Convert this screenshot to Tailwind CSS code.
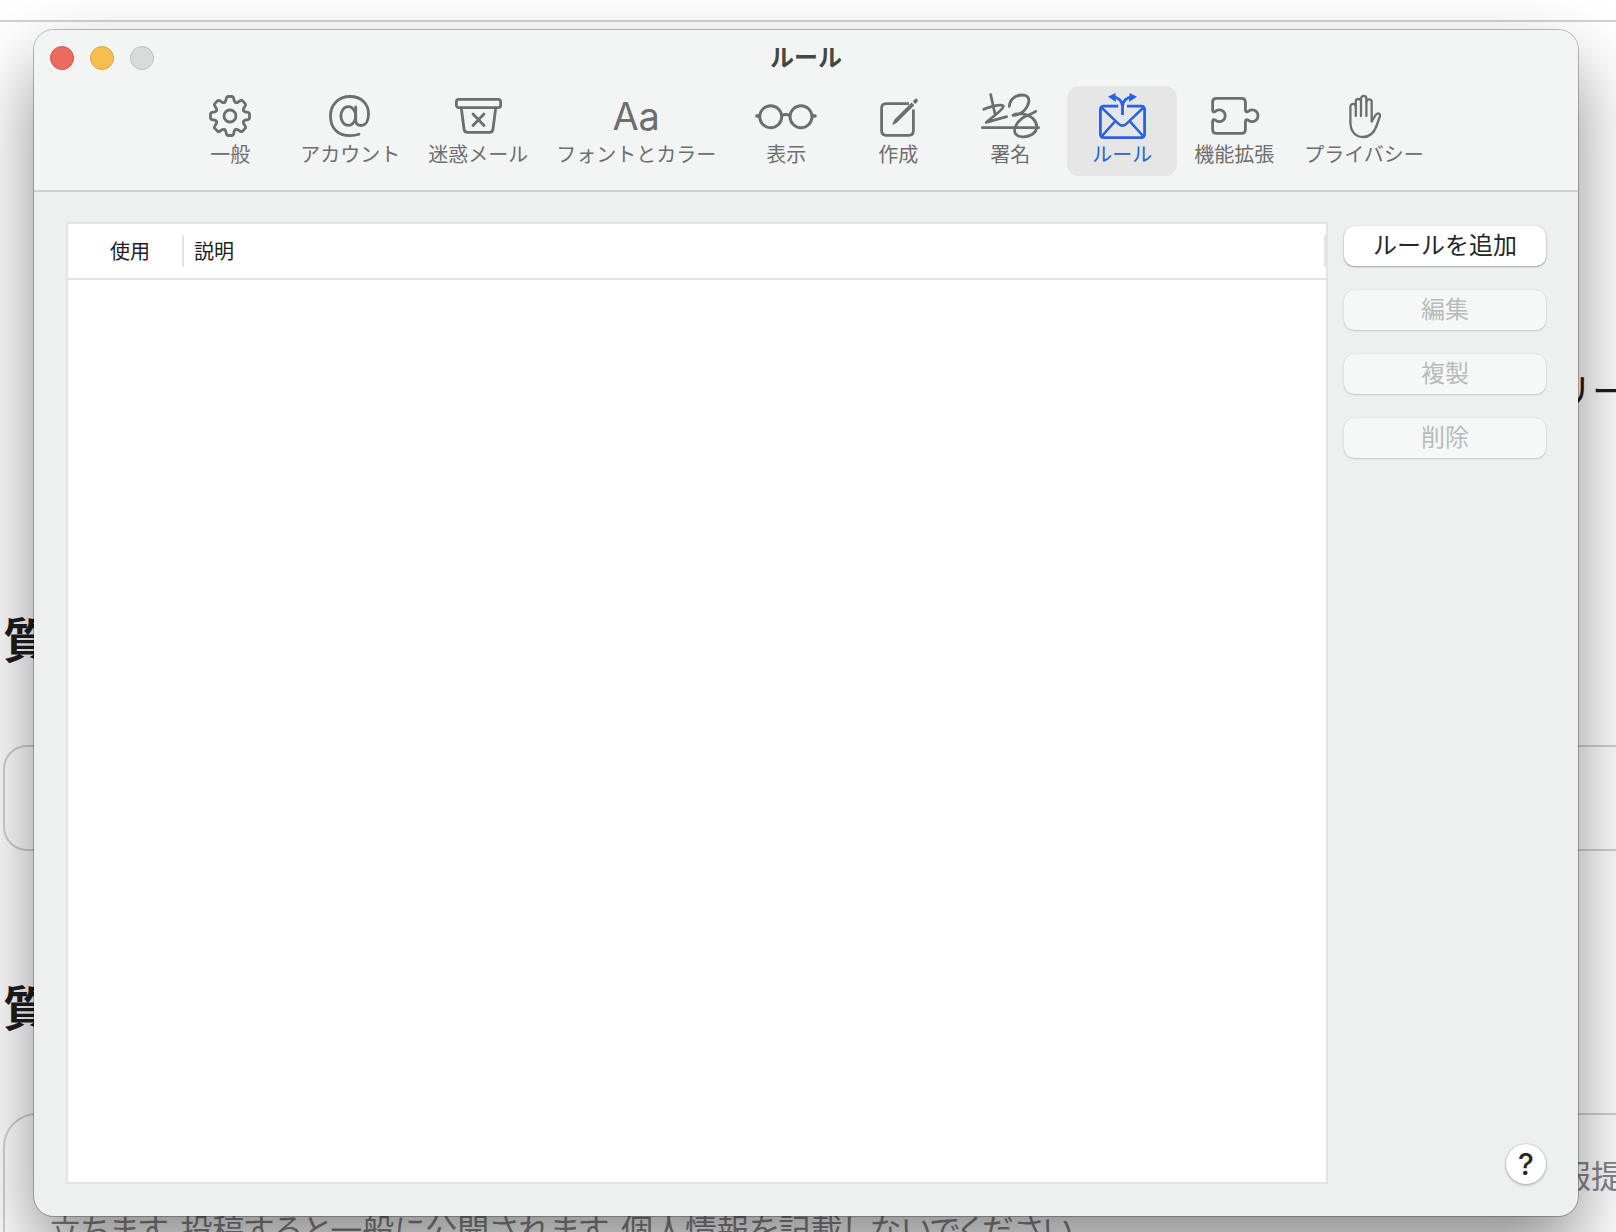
<!DOCTYPE html>
<html lang="ja">
<head>
  <meta charset="UTF-8" />
  <meta name="viewport" content="width=device-width, initial-scale=1.0" />
  <title>ルール</title>
  <script src="https://cdn.jsdelivr.net/npm/@tailwindcss/browser@4"></script>
</head>
<body class="relative h-screen overflow-hidden bg-white font-['Noto_Sans_CJK_JP',sans-serif] text-[#1d1d1f]">

  <!-- Page behind the window -->
  <div class="absolute inset-0 overflow-hidden whitespace-nowrap" aria-hidden="true">
    <hr class="mt-5 border-t-2 border-[#d2d2d4]" />
    <div class="flex justify-end pt-[343px]">
      <p class="w-[60px] text-[36px] leading-12 font-normal">リー</p>
    </div>
    <p class="mt-[192px] pl-[3px] text-[48px] leading-16 font-bold">質</p>
    <div class="mt-[76px] -mr-10 ml-[3px] h-[106px] rounded-3xl border-2 border-[#d2d2d7]"></div>
    <p class="mt-[122px] pl-[3px] text-[48px] leading-16 font-bold">質</p>
    <div class="mt-[76px] -mr-10 ml-[3px] h-60 rounded-[34px] border-2 border-[#d2d2d7] pt-8 pr-[46px] pl-11 text-[32px] leading-[54px] text-[#86868b]">
      <p class="flex justify-end"><span class="w-[49px]">報提</span></p>
      <p class="[font-feature-settings:'palt']">立ちます。投稿すると一般に公開されます。個人情報を記載しないでください。</p>
    </div>
  </div>

  <!-- Settings window -->
  <div class="relative flex h-full pt-[30px] pr-[38px] pb-4 pl-[34px]">
    <main class="flex flex-1 flex-col overflow-hidden rounded-[20px] bg-[#eef0ef] shadow-[0_0_0_1px_rgba(0,0,0,0.25),0_36px_72px_rgba(0,0,0,0.45)]">

      <header class="border-b-2 border-[#cfd1d0] bg-[#f3f5f4] pb-3.5">
        <div class="grid h-14 grid-cols-3 items-center px-4">
          <div class="flex gap-4">
            <button aria-label="閉じる" class="size-6 rounded-full border border-[#d5544a] bg-[#ec6a5e]"></button>
            <button aria-label="しまう" class="size-6 rounded-full border border-[#d9a441] bg-[#f5bf4f]"></button>
            <button aria-label="拡大" disabled class="size-6 rounded-full border border-[#bfc1c0] bg-[#d9dbda]"></button>
          </div>
          <h1 class="pb-1 text-center text-2xl font-bold text-[#454646]">ルール</h1>
        </div>

        <nav class="flex justify-center gap-0.5 text-xl leading-6 text-[#6d6e6e]">
          <button class="flex h-[90px] min-w-[110px] flex-col items-center gap-1 px-[13px] pt-2">
            <span class="flex h-11 items-center">
              <svg width="44" height="44" viewBox="-22 -22 44 44" fill="none" stroke="currentColor" stroke-width="2.8" stroke-linecap="round">
                <defs><path id="tooth" d="M-5.6 -13.5Q-4.6 -13.9 -4.2 -15.3L-3.6 -18Q-3.3 -19.5 -2 -19.5H2Q3.3 -19.5 3.6 -18L4.2 -15.3Q4.6 -13.9 5.6 -13.5" /></defs>
                <use href="#tooth" /><use href="#tooth" transform="rotate(45)" /><use href="#tooth" transform="rotate(90)" /><use href="#tooth" transform="rotate(135)" />
                <use href="#tooth" transform="rotate(180)" /><use href="#tooth" transform="rotate(225)" /><use href="#tooth" transform="rotate(270)" /><use href="#tooth" transform="rotate(315)" />
                <circle r="6" />
              </svg>
            </span>
            <span>一般</span>
          </button>
          <button class="flex h-[90px] min-w-[110px] flex-col items-center gap-1 px-[13px] pt-2">
            <span class="flex h-11 items-center">
              <svg width="42" height="42" viewBox="0 0 42 42" fill="none" stroke="currentColor" stroke-width="2.8" stroke-linecap="round">
                <path d="M30 39.3C27.5 40.2 24.5 40.6 21 40.6C9 40.6 1.5 33.5 1.5 21C1.5 9.5 9.5 1.5 21 1.5C32.5 1.5 39.5 9 39.5 19C39.5 26.5 36.5 30.5 32 30.5C28.5 30.5 26.7 28.5 26.7 25V12" />
                <ellipse cx="19.3" cy="21" rx="7.4" ry="9.3" />
              </svg>
            </span>
            <span>アカウント</span>
          </button>
          <button class="flex h-[90px] min-w-[110px] flex-col items-center gap-1 px-[13px] pt-2">
            <span class="flex h-11 items-center">
              <svg width="47" height="42" viewBox="0 0 47 42" fill="none" stroke="currentColor" stroke-width="2.8" stroke-linecap="round" stroke-linejoin="round">
                <rect x="1.4" y="4.4" width="44.2" height="8.2" rx="2.4" />
                <path d="M6.3 13L9 34Q9.4 37.3 12.5 37.3H34.5Q37.6 37.3 38 34L40.7 13M18 19L29 30.5M29 19L18 30.5" />
              </svg>
            </span>
            <span>迷惑メール</span>
          </button>
          <button class="flex h-[90px] min-w-[110px] flex-col items-center gap-1 px-[13px] pt-2">
            <span class="flex h-11 items-center font-[Inter,sans-serif] text-[38px]">Aa</span>
            <span>フォントとカラー</span>
          </button>
          <button class="flex h-[90px] min-w-[110px] flex-col items-center gap-1 px-[13px] pt-2">
            <span class="flex h-11 items-center">
              <svg width="62" height="42" viewBox="0 0 62 42" fill="none" stroke="currentColor" stroke-width="2.9" stroke-linecap="round">
                <circle cx="15.7" cy="21.7" r="11" /><circle cx="46" cy="21.7" r="11" />
                <path stroke-width="3.6" d="M2 21H4M58 21H60" />
                <path d="M27 20.5Q30.8 18.6 34.7 20.5" />
              </svg>
            </span>
            <span>表示</span>
          </button>
          <button class="flex h-[90px] min-w-[110px] flex-col items-center gap-1 px-[13px] pt-2">
            <span class="flex h-11 items-center">
              <svg width="40" height="44" viewBox="0 0 40 44" fill="none" stroke="currentColor" stroke-width="2.8" stroke-linecap="butt">
                <path d="M31 9.6H8.2Q3.6 9.6 3.6 14.2V36.8Q3.6 41.3 8.2 41.3H31Q35.4 41.3 35.4 36.8V15.5" />
                <path fill="currentColor" stroke="none" d="M14.4 30.6L16.2 25.8L33.6 8.6L36.3 11.3L19 28.5L14.9 31.1Z" />
                <path fill="currentColor" stroke="none" d="M34.8 7.4L36.8 5.2Q38.2 4 39.4 5.3Q40.4 6.7 39.3 8L37.3 10.1Z" />
              </svg>
            </span>
            <span>作成</span>
          </button>
          <button class="flex h-[90px] min-w-[110px] flex-col items-center gap-1 px-[13px] pt-2">
            <span class="flex h-11 items-center">
              <svg width="59" height="46" viewBox="0 0 59 46" fill="none" stroke="currentColor" stroke-width="2.8" stroke-linecap="round" stroke-linejoin="round">
                <path d="M9.7 1.7L14 20.7" />
                <path d="M2.7 16.3C9 14 19 11.3 22.3 12.7C23.5 14.5 15.7 21 5.3 29.3L25.7 23.7" />
                <path d="M28.3 13.3C29 4.5 37 1 44 2.3C50 4.5 48.5 12 43 17.7C40 20.5 35 23 32 22.3C37 19.5 46 20 52 25.5C57 31 57.5 37 51 41.5C45 45 37 44.5 34.3 40.5C32 36 36 29 41 25.3C45 22.5 50 21.5 54.7 18.3" />
                <path d="M1.4 34.7H57.6" />
              </svg>
            </span>
            <span>署名</span>
          </button>
          <button aria-current="page" class="flex h-[90px] min-w-[110px] flex-col items-center gap-1 rounded-xl bg-[#e6e6e6] px-[13px] pt-2 text-[#2763e4]">
            <span class="flex h-11 items-center">
              <svg width="47" height="46" viewBox="0 0 47 46" fill="none" stroke="currentColor" stroke-width="2.8" stroke-linejoin="round">
                <path d="M19.2 13.2H5Q1.4 13.2 1.4 16.8V41Q1.4 44.6 5 44.6H42Q45.6 44.6 45.6 41V16.8Q45.6 13.2 42 13.2H28" />
                <path d="M2.5 14.5L19.6 30.8Q23.5 34.4 27.4 30.8L44.5 14.5M2.5 43.5L15.6 28.8M44.5 43.5L31.4 28.8" stroke-width="2.5" />
                <path d="M23.5 22V13.5C23.5 8 19 4.3 14 4.2M23.5 13.5C23.5 8 28 4.3 33 4.2" />
                <path fill="currentColor" stroke="none" d="M9 3.8L16.4 0L17 8.9ZM38 3.8L30.6 0L30 8.9Z" />
              </svg>
            </span>
            <span>ルール</span>
          </button>
          <button class="flex h-[90px] min-w-[110px] flex-col items-center gap-1 px-[13px] pt-2">
            <span class="flex h-11 items-center">
              <svg width="48" height="44" viewBox="-1 0 48 44" fill="none" stroke="currentColor" stroke-width="2.8" stroke-linecap="round" stroke-linejoin="round" class="overflow-visible">
                <path d="M1.6 16V8.2Q1.6 4.3 5.5 4.3H30.5Q34.4 4.3 34.4 8.2V15.5Q34.5 18.7 37 17.5A5.9 5.9 0 1 1 37 26Q34.5 24.8 34.4 28V35.5Q34.4 39.4 30.5 39.4H5.5Q1.6 39.4 1.6 35.5V27.5Q1.7 24.8 4.2 26A5.9 5.9 0 1 0 4.2 17.5Q1.7 18.7 1.6 16" />
              </svg>
            </span>
            <span>機能拡張</span>
          </button>
          <button class="flex h-[90px] min-w-[110px] flex-col items-center gap-1 px-[13px] pt-2">
            <span class="flex h-11 items-center">
              <svg width="32" height="45" viewBox="-1 0 32 45" fill="none" stroke="currentColor" stroke-width="2.3" stroke-linecap="round" stroke-linejoin="round" class="overflow-visible">
                <path d="M6.8 22V12.6A2.7 2.7 0 0 0 1.4 12.6V28C1.4 37 6 43 14 43C21 43 25 39 27.5 32L30.8 22.7C31.4 20.7 30.5 19.3 29.3 19.3C27.8 19.3 27 20.3 26.3 21.5L22.7 27.5V7.6A2.7 2.7 0 0 0 17.4 7.6" />
                <path d="M6.8 12.6V7.6A2.6 2.6 0 0 1 12 7.6M12 22V4.6A2.7 2.7 0 0 1 17.4 4.6V22" />
              </svg>
            </span>
            <span>プライバシー</span>
          </button>
        </nav>
      </header>

      <section class="flex flex-1 gap-4 px-8 pt-[30px] pb-8">
        <div class="flex-1 border-2 border-[#e3e4e4] bg-white">
          <table class="w-full border-collapse text-left text-xl">
            <thead>
              <tr class="h-[55px] border-b-2 border-[#e3e4e4]">
                <th scope="col" class="w-[116px] p-0 font-normal">
                  <div class="flex h-8 items-center justify-center border-r-2 border-[#e3e4e4] pl-2.5">使用</div>
                </th>
                <th scope="col" class="p-0 font-normal">
                  <div class="flex h-8 items-center border-r-2 border-[#e3e4e4] pl-2.5">説明</div>
                </th>
              </tr>
            </thead>
            <tbody></tbody>
          </table>
        </div>

        <div class="flex w-[202px] flex-col gap-6 pt-1">
          <button class="h-10 rounded-[10px] bg-white pb-1 text-2xl text-[#262727] shadow-[0_0_1px_rgba(0,0,0,0.3),0_1px_2px_rgba(0,0,0,0.3)]">ルールを追加</button>
          <button disabled class="h-10 rounded-[10px] bg-[#f6f8f7] pb-1 text-2xl text-[#b9bbba] shadow-[0_0_1px_rgba(0,0,0,0.2),0_1px_2px_rgba(0,0,0,0.15)]">編集</button>
          <button disabled class="h-10 rounded-[10px] bg-[#f6f8f7] pb-1 text-2xl text-[#b9bbba] shadow-[0_0_1px_rgba(0,0,0,0.2),0_1px_2px_rgba(0,0,0,0.15)]">複製</button>
          <button disabled class="h-10 rounded-[10px] bg-[#f6f8f7] pb-1 text-2xl text-[#b9bbba] shadow-[0_0_1px_rgba(0,0,0,0.2),0_1px_2px_rgba(0,0,0,0.15)]">削除</button>
          <button aria-label="ヘルプ" class="mt-auto flex size-10 items-center justify-center self-end rounded-full bg-white font-[Inter,sans-serif] text-[30px] font-medium text-[#262727] shadow-[0_0_1px_rgba(0,0,0,0.3),0_1px_3px_rgba(0,0,0,0.3)]">?</button>
        </div>
      </section>
    </main>
  </div>

</body>
</html>
